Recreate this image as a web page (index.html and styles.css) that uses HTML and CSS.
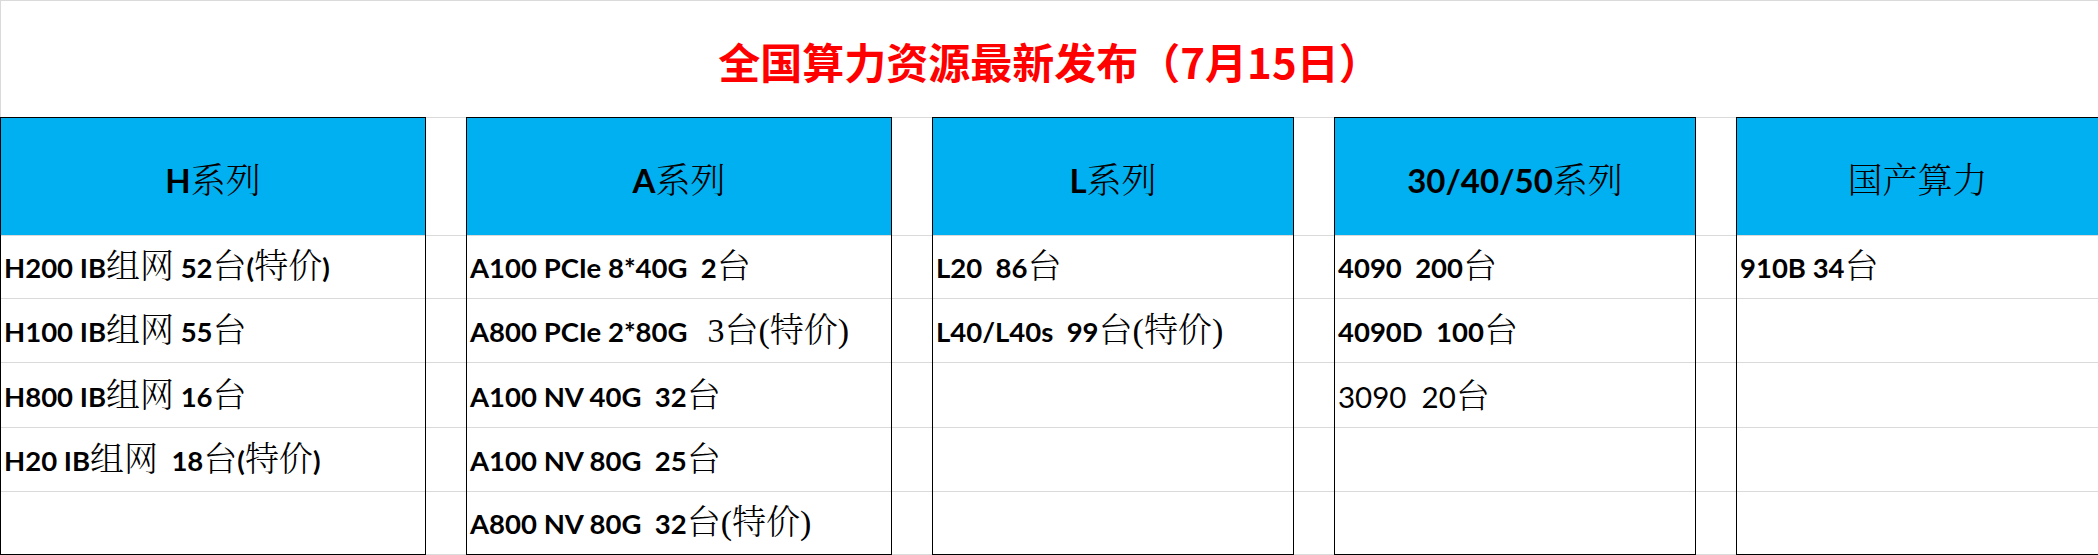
FILE: index.html
```html
<!DOCTYPE html>
<html lang="zh-CN">
<head>
<meta charset="utf-8">
<title>全国算力资源最新发布</title>
<link rel="stylesheet" href="styles.css">
</head>
<body>
<div class="sheet">
  <div class="title"><span class="title-text">全国算力资源最新发布（7月15日）</span></div>
  <div class="blocks">
    <section class="block w-wide">
      <div class="hd"><span class="hx">H<span class="hc">系列</span></span></div>
      <div class="row r1"><span class="tx">H200 IB<span class="c">组网</span> 52<span class="c">台</span>(<span class="c">特价</span>)</span></div>
      <div class="row r2"><span class="tx">H100 IB<span class="c">组网</span> 55<span class="c">台</span></span></div>
      <div class="row r3"><span class="tx">H800 IB<span class="c">组网</span> 16<span class="c">台</span></span></div>
      <div class="row r4"><span class="tx">H20 IB<span class="c">组网</span>  18<span class="c">台</span>(<span class="c">特价</span>)</span></div>
      <div class="row r5"></div>
    </section>
    <div class="gap"><div class="hd-gap"></div><div class="gc r1"></div><div class="gc r2"></div><div class="gc r3"></div><div class="gc r4"></div><div class="gc r5"></div></div>
    <section class="block w-wide">
      <div class="hd"><span class="hx">A<span class="hc">系列</span></span></div>
      <div class="row r1"><span class="tx">A100 PCIe 8*40G  2<span class="c">台</span></span></div>
      <div class="row r2"><span class="tx">A800 PCIe 2*80G   <span class="s">3</span><span class="c">台</span><span class="s">(</span><span class="c">特价</span><span class="s">)</span></span></div>
      <div class="row r3"><span class="tx">A100 NV 40G  32<span class="c">台</span></span></div>
      <div class="row r4"><span class="tx">A100 NV 80G  25<span class="c">台</span></span></div>
      <div class="row r5"><span class="tx">A800 NV 80G  32<span class="c">台</span><span class="s">(</span><span class="c">特价</span><span class="s">)</span></span></div>
    </section>
    <div class="gap"><div class="hd-gap"></div><div class="gc r1"></div><div class="gc r2"></div><div class="gc r3"></div><div class="gc r4"></div><div class="gc r5"></div></div>
    <section class="block w-narrow">
      <div class="hd"><span class="hx">L<span class="hc">系列</span></span></div>
      <div class="row r1"><span class="tx">L20  86<span class="c">台</span></span></div>
      <div class="row r2"><span class="tx">L40/L40s  99<span class="c">台</span><span class="s">(</span><span class="c">特价</span><span class="s">)</span></span></div>
      <div class="row r3"></div>
      <div class="row r4"></div>
      <div class="row r5"></div>
    </section>
    <div class="gap"><div class="hd-gap"></div><div class="gc r1"></div><div class="gc r2"></div><div class="gc r3"></div><div class="gc r4"></div><div class="gc r5"></div></div>
    <section class="block w-narrow">
      <div class="hd"><span class="hx">30/40/50<span class="hc">系列</span></span></div>
      <div class="row r1"><span class="tx">4090  200<span class="c">台</span></span></div>
      <div class="row r2"><span class="tx">4090D  100<span class="c">台</span></span></div>
      <div class="row r3"><span class="tx reg">3090  20<span class="c">台</span></span></div>
      <div class="row r4"></div>
      <div class="row r5"></div>
    </section>
    <div class="gap"><div class="hd-gap"></div><div class="gc r1"></div><div class="gc r2"></div><div class="gc r3"></div><div class="gc r4"></div><div class="gc r5"></div></div>
    <section class="block w-last">
      <div class="hd"><span class="hx"><span class="hc">国产算力</span></span></div>
      <div class="row r1"><span class="tx">910B 34<span class="c">台</span></span></div>
      <div class="row r2"></div>
      <div class="row r3"></div>
      <div class="row r4"></div>
      <div class="row r5"></div>
    </section>
  </div>
</div>
</body>
</html>
```
FILE: styles.css
```css
html, body {
  margin: 0;
  padding: 0;
  background: #ffffff;
}
body {
  width: 2098px;
  height: 555px;
  overflow: hidden;
  color: #000000;
}
.sheet {
  width: 2098px;
}
.title {
  box-sizing: border-box;
  height: 117px;
  border-top: 1px solid #dadada;
  border-left: 1px solid #dadada;
  display: flex;
  align-items: center;
  justify-content: center;
  padding-top: 4px;
}
.title-text {
  font-family: "Noto Sans CJK SC", sans-serif;
  font-weight: 700;
  font-size: 42px;
  line-height: 1;
  color: #ff0000;
}
.blocks {
  display: flex;
}
.block {
  box-sizing: border-box;
  flex: none;
  border: 1px solid #000000;
  display: flex;
  flex-direction: column;
}
.w-wide { width: 426px; }
.w-narrow { width: 362px; }
.w-last { width: 363px; }
.gap {
  flex: none;
  width: 40px;
  border-top: 1px solid #dadada;
  display: flex;
  flex-direction: column;
}
.hd, .hd-gap {
  box-sizing: border-box;
  height: 118px;
  border-bottom: 1px solid #dadada;
  flex: none;
}
.hd {
  background: #00b0f0;
  display: flex;
  align-items: center;
  justify-content: center;
  padding-top: 4px;
}
.hx {
  font-family: Lato, sans-serif;
  font-weight: 700;
  font-size: 33px;
  line-height: 40px;
  white-space: pre;
}
.hc {
  font-family: "Noto Serif CJK SC", "Noto Sans CJK SC", serif;
  font-weight: 300;
  font-size: 35px;
}
.row, .gc {
  box-sizing: border-box;
  flex: none;
  border-bottom: 1px solid #dadada;
}
.row {
  display: flex;
  align-items: flex-end;
  padding: 0 0 15px 3px;
}
.r1 { height: 63px; }
.r2 { height: 64px; }
.r3 { height: 65px; }
.r4 { height: 64px; }
.row.r5 { height: 62px; border-bottom: none; }
.gc.r5 { height: 63px; }
.tx {
  font-family: Lato, sans-serif;
  font-weight: 700;
  font-size: 27.5px;
  line-height: 30px;
  white-space: pre;
}
.tx.reg {
  font-weight: 400;
  font-size: 29.5px;
}
.c {
  font-family: "Noto Serif CJK SC", "Noto Sans CJK SC", serif;
  font-weight: 300;
  font-size: 34px;
}
.s {
  font-family: "Liberation Serif", serif;
  font-weight: 400;
  font-size: 34px;
}
```
